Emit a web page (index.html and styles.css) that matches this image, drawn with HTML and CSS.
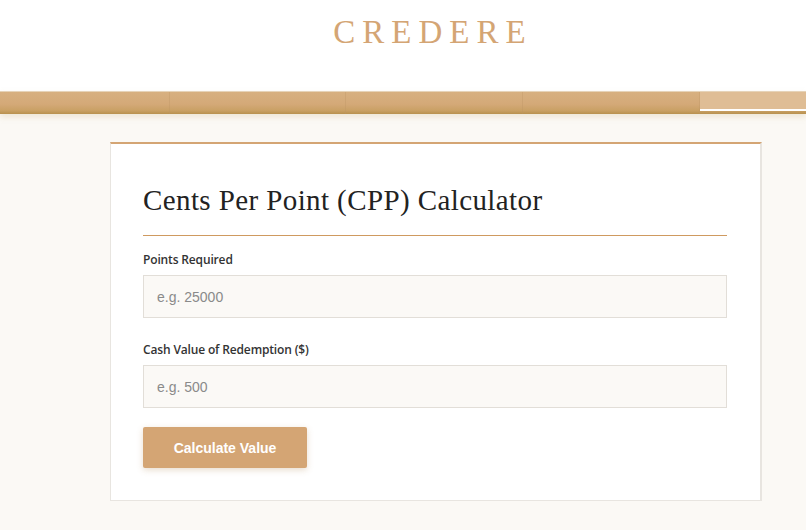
FILE: index.html
```html
<!DOCTYPE html>
<html lang="en">
<head>
    <meta charset="UTF-8">
    <meta name="viewport" content="width=device-width, initial-scale=1.0">
    <title>CPP Calculator - Credere</title>
    <link rel="stylesheet" href="styles.css">
</head>
<body>
    <header class="site-header">
        <div class="logo">CREDERE</div>
    </header>
    <nav class="main-nav">
        <a class="nav-tab tab-1" href="#"></a>
        <a class="nav-tab tab-2" href="#"></a>
        <a class="nav-tab tab-3" href="#"></a>
        <a class="nav-tab tab-4" href="#"></a>
        <a class="nav-tab tab-active" href="#"></a>
    </nav>
    <main class="page">
        <div class="card">
            <h1>Cents Per Point (CPP) Calculator</h1>
            <div class="field">
                <label for="points">Points Required</label>
                <input type="number" id="points" class="text-input" placeholder="e.g. 25000">
            </div>
            <div class="field">
                <label for="cash">Cash Value of Redemption ($)</label>
                <input type="number" id="cash" class="text-input" placeholder="e.g. 500">
            </div>
            <button class="calc-btn">Calculate Value</button>
        </div>
    </main>
</body>
</html>
```

FILE: styles.css
```css
body {
    margin: 0;
    background-color: #fbf9f5;
    font-family: "Open Sans", Arial, sans-serif;
    color: #333;
}
.site-header {
    background-color: #fff;
    height: 91px;
    box-sizing: border-box;
    padding: 12px 0 0 60px;
    text-align: center;
}
.logo {
    font-family: "Liberation Serif", "Times New Roman", serif;
    font-size: 33px;
    letter-spacing: 7px;
    color: #d4a574;
    line-height: 40px;
}
.main-nav {
    display: flex;
    height: 23px;
    background: linear-gradient(to bottom, #d7b080 0%, #d4a978 55%, #c9a064 85%, #b8914f 100%);
    border-top: 1px solid #e6d3b8;
    box-sizing: border-box;
    box-shadow: 0 3px 6px rgba(200, 170, 120, 0.25);
}
.nav-tab {
    display: block;
    box-sizing: border-box;
    border-right: 1px solid rgba(190, 150, 100, 0.35);
}
.tab-1 { width: 170px; }
.tab-2 { width: 176px; }
.tab-3 { width: 177px; }
.tab-4 { width: 177px; }
.tab-active {
    flex: 1;
    border-right: none;
    background-color: #dfbd95;
    border-bottom: 2px solid #fff;
    margin-bottom: 3px;
}
.page {
    padding: 28px 0 40px 110px;
}
.card {
    width: 652px;
    box-sizing: border-box;
    background-color: #fff;
    border: 1px solid #e8e5e0;
    border-right-width: 2px;
    border-top: 2px solid #d4a574;
    padding: 38px 33px 32px 32px;
}
.card h1 {
    font-family: "Liberation Serif", Georgia, serif;
    font-weight: normal;
    font-size: 29px;
    letter-spacing: 0.4px;
    color: #222;
    margin: 0 0 15px;
    padding-bottom: 17px;
    border-bottom: 1px solid #cf9a60;
    line-height: 36px;
}
.field {
    margin-bottom: 23px;
}
.field:last-of-type {
    margin-bottom: 19px;
}
.field label {
    display: block;
    font-size: 12px;
    font-weight: 600;
    letter-spacing: -0.15px;
    color: #333;
    margin-bottom: 7px;
}
.text-input {
    width: 100%;
    box-sizing: border-box;
    height: 43px;
    padding: 0 13px;
    border: 1px solid #e2ded8;
    background-color: #fbf9f6;
    font-family: "Liberation Sans", Arial, sans-serif;
    font-size: 14px;
    color: #333;
}
.text-input::placeholder {
    color: #8a8a8a;
}
.calc-btn {
    width: 164px;
    height: 41px;
    border: none;
    border-radius: 2px;
    background-color: #d4a574;
    color: #fff;
    font-family: "Liberation Sans", Arial, sans-serif;
    font-weight: bold;
    font-size: 14px;
    box-shadow: 0 2px 6px rgba(180, 140, 90, 0.3);
    cursor: pointer;
}
```
